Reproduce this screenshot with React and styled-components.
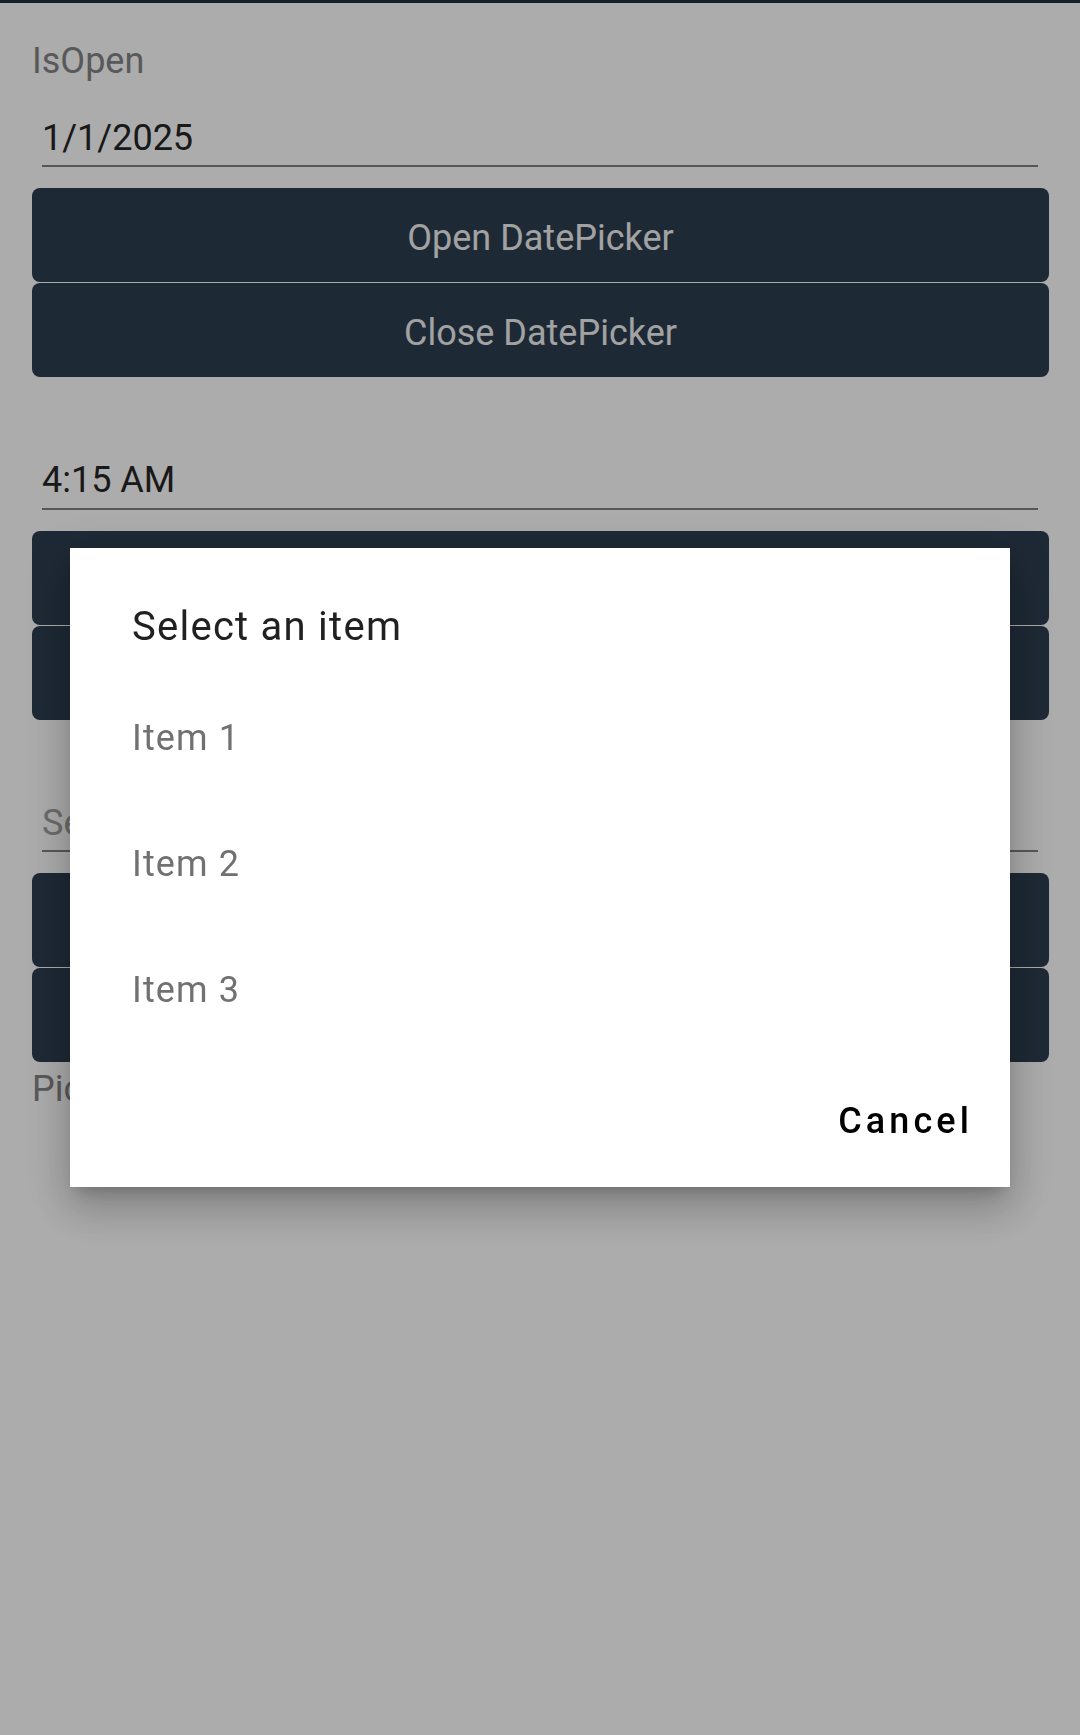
import React from 'react';
import styled, { createGlobalStyle } from 'styled-components';

const GlobalStyle = createGlobalStyle`
  * { box-sizing: border-box; }
  html, body { margin: 0; padding: 0; }
  body {
    background: #ffffff;
    font-family: Roboto, "Noto Sans", sans-serif;
  }
`;

const sections = [
  { label: 'IsOpen', value: '1/1/2025', open: 'Open DatePicker', close: 'Close DatePicker' },
  { label: '', value: '4:15 AM', open: 'Open TimePicker', close: 'Close TimePicker' },
  { label: '', placeholder: 'Select an item', open: 'Open Picker', close: 'Close Picker' },
];

const items = ['Item 1', 'Item 2', 'Item 3'];

export default function App() {
  return (
    <>
      <GlobalStyle />
      <TopStrip />
      <Page>
        {sections.map((s, i) => (
          <Section key={`section${i}`}>
            <Label>{s.label}</Label>
            <Entry readOnly value={s.value || ''} placeholder={s.placeholder} />
            <ButtonStack>
              <ActionButton>{s.open}</ActionButton>
              <ActionButton>{s.close}</ActionButton>
            </ButtonStack>
          </Section>
        ))}
        <Label>Picker IsOpen: True</Label>
      </Page>

      <Scrim>
        <Dialog role="dialog">
          <DialogTitle>Select an item</DialogTitle>
          <ItemList>
            {items.map((item) => (
              <ItemRow key={item}>{item}</ItemRow>
            ))}
          </ItemList>
          <DialogActions>
            <TextButton>Cancel</TextButton>
          </DialogActions>
        </Dialog>
      </Scrim>
    </>
  );
}

const TopStrip = styled.div`
  height: 3px;
  background: #213040;
`;

const Page = styled.main`
  display: flex;
  flex-direction: column;
  padding: 37px 31px 0 32px;
`;

const Section = styled.section`
  display: flex;
  flex-direction: column;
  margin-bottom: 5.5px;
`;

const Label = styled.div`
  height: 43px;
  font-size: 36px;
  line-height: 43px;
  color: #848484;
  white-space: nowrap;
`;

const Entry = styled.input`
  display: block;
  height: 84px;
  margin: 0 11px 0 10px;
  padding: 33px 0 6px 0;
  border: none;
  border-bottom: 2px solid #818181;
  border-radius: 0;
  background: transparent;
  outline: none;
  font-family: Roboto, "Noto Sans", sans-serif;
  font-size: 36px;
  line-height: 43px;
  color: #262626;

  &::placeholder {
    color: #a0a0a0;
  }
`;

const ButtonStack = styled.div`
  display: flex;
  flex-direction: column;
  gap: 1px;
  margin-top: 21px;
`;

const ActionButton = styled.button`
  height: 94px;
  border: none;
  border-radius: 8px;
  background: #2c3d4f;
  color: #f0f0f0;
  font-family: Roboto, "Noto Sans", sans-serif;
  font-size: 36px;
  line-height: 43px;
  text-align: center;
  padding: 6px 0 0 0;
`;

const Scrim = styled.div`
  position: fixed;
  inset: 0;
  background: rgba(0, 0, 0, 0.325);
  display: flex;
  align-items: center;
  justify-content: center;
`;

const Dialog = styled.div`
  width: 940px;
  background: #ffffff;
  display: flex;
  flex-direction: column;
  padding: 55px 0 42px 0;
  box-shadow:
    0 11px 15px -7px rgba(0, 0, 0, 0.2),
    0 24px 38px 3px rgba(0, 0, 0, 0.14),
    0 9px 46px 8px rgba(0, 0, 0, 0.12);
`;

const DialogTitle = styled.h2`
  margin: 0;
  padding: 0 62px;
  font-size: 40px;
  line-height: 48px;
  font-weight: 400;
  letter-spacing: 1.25px;
  color: #212121;
`;

const ItemList = styled.ul`
  list-style: none;
  margin: 24px 0 0 0;
  padding: 0;
`;

const ItemRow = styled.li`
  height: 126px;
  padding: 0 62px;
  font-size: 36px;
  line-height: 126px;
  letter-spacing: 1.1px;
  color: #717171;
`;

const DialogActions = styled.div`
  display: flex;
  justify-content: flex-end;
  margin-top: 44px;
  padding: 0 37px;
`;

const TextButton = styled.button`
  height: 48px;
  padding: 0;
  border: none;
  background: transparent;
  font-family: Roboto, "Noto Sans", sans-serif;
  font-size: 36px;
  line-height: 48px;
  font-weight: 500;
  letter-spacing: 4.1px;
  color: #000000;
`;
